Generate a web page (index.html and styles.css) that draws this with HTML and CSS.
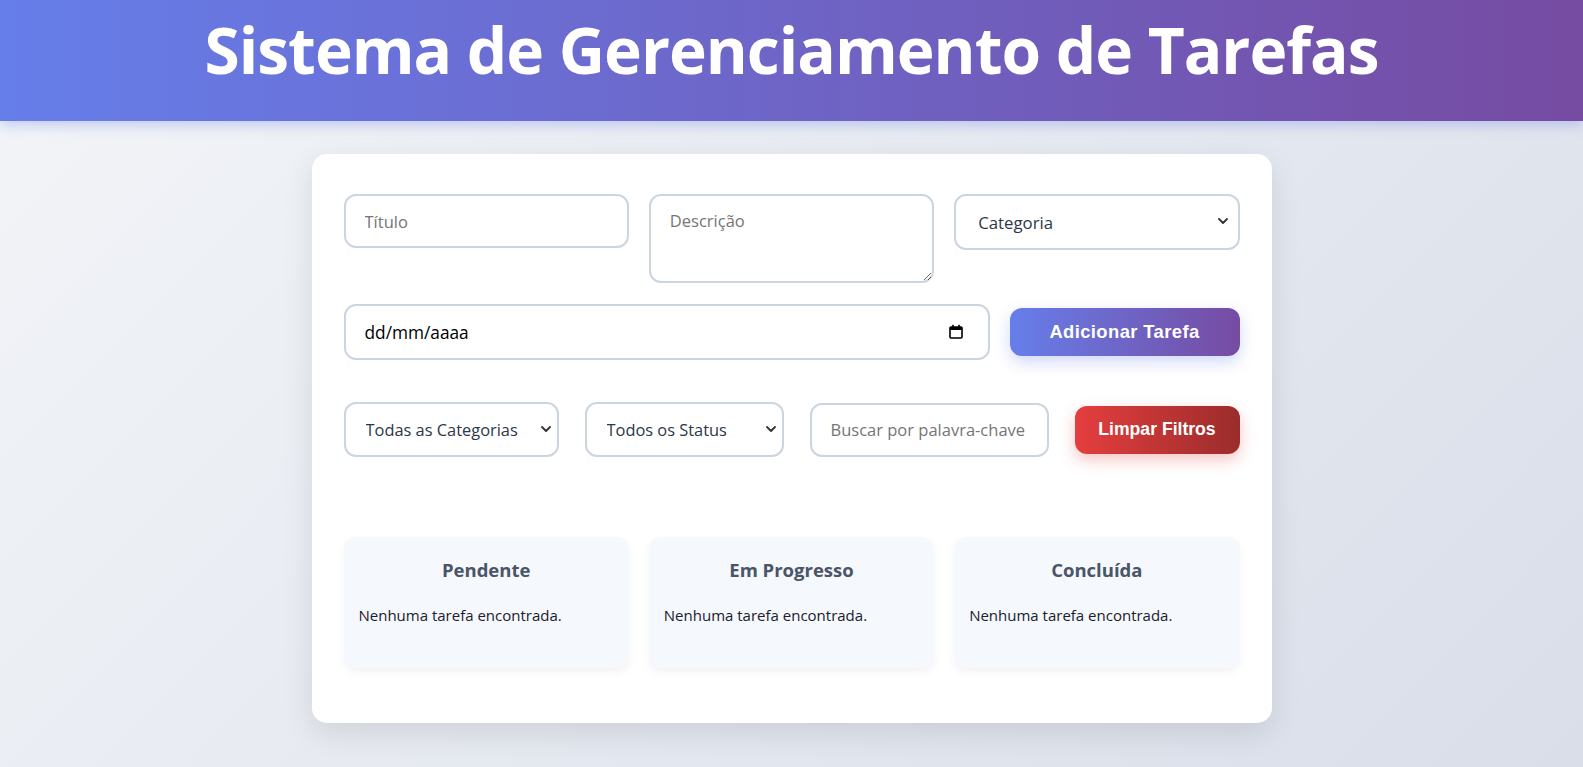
FILE: index.html
```html
<!DOCTYPE html>
<html lang="pt-BR">
<head>
<meta charset="utf-8">
<title>Sistema de Gerenciamento de Tarefas</title>
<link rel="stylesheet" href="styles.css">
</head>
<body>
<header class="app-header">
  <h1 class="app-title">Sistema de Gerenciamento de Tarefas</h1>
</header>
<main class="container">
  <form class="task-form">
    <div class="form-row row-top">
      <input class="field field-input" type="text" placeholder="Título">
      <textarea class="field field-area" placeholder="Descrição"></textarea>
      <div class="select-wrap">
        <select class="field field-select"><option>Categoria</option></select>
        <svg class="chevron" viewBox="0 0 10 6" width="10" height="6"><path d="M1 1l4 4 4-4" fill="none" stroke="#333" stroke-width="1.8" stroke-linecap="round" stroke-linejoin="round"/></svg>
      </div>
    </div>
    <div class="form-row row-bottom">
      <div class="field date-field">
        <span class="date-text">dd/mm/aaaa</span>
        <svg class="calendar" viewBox="0 0 14 15" width="14" height="15"><rect x="1" y="3" width="12" height="11" rx="1" fill="none" stroke="#000" stroke-width="1.6"/><rect x="1" y="3" width="12" height="3" fill="#000"/><rect x="3.2" y="0.8" width="1.6" height="3" fill="#000"/><rect x="9.2" y="0.8" width="1.6" height="3" fill="#000"/></svg>
      </div>
      <button type="button" class="btn btn-primary">Adicionar Tarefa</button>
    </div>
  </form>

  <div class="filters">
    <div class="select-wrap filter-cat">
      <select class="field filter-select"><option>Todas as Categorias</option></select>
      <svg class="chevron" viewBox="0 0 10 6" width="10" height="6"><path d="M1 1l4 4 4-4" fill="none" stroke="#333" stroke-width="1.8" stroke-linecap="round" stroke-linejoin="round"/></svg>
    </div>
    <div class="select-wrap filter-status">
      <select class="field filter-select"><option>Todos os Status</option></select>
      <svg class="chevron" viewBox="0 0 10 6" width="10" height="6"><path d="M1 1l4 4 4-4" fill="none" stroke="#333" stroke-width="1.8" stroke-linecap="round" stroke-linejoin="round"/></svg>
    </div>
    <input class="field search-input" type="text" placeholder="Buscar por palavra-chave">
    <button type="button" class="btn btn-danger">Limpar Filtros</button>
  </div>

  <section class="columns">
    <div class="column">
      <h2 class="column-title">Pendente</h2>
      <p class="empty">Nenhuma tarefa encontrada.</p>
    </div>
    <div class="column">
      <h2 class="column-title">Em Progresso</h2>
      <p class="empty">Nenhuma tarefa encontrada.</p>
    </div>
    <div class="column">
      <h2 class="column-title">Concluída</h2>
      <p class="empty">Nenhuma tarefa encontrada.</p>
    </div>
  </section>
</main>
</body>
</html>
```

FILE: styles.css
```css
* { box-sizing: border-box; }

html, body {
  margin: 0;
  padding: 0;
}

body {
  min-height: 767px;
  font-family: "Open Sans", "Noto Sans", sans-serif;
  background: linear-gradient(135deg, #f3f5f8 0%, #d9dee9 100%);
  color: #2d3748;
  overflow: hidden;
}

.app-header {
  height: 121px;
  background: linear-gradient(90deg, #667eea 0%, #764ba2 100%);
  box-shadow: 0 4px 12px rgba(102, 126, 234, 0.35);
  display: flex;
  align-items: center;
  justify-content: center;
  padding-bottom: 22px;
}

.app-title {
  margin: 0;
  color: #fff;
  font-size: 64px;
  font-weight: 700;
  letter-spacing: -1px;
  line-height: 1;
}

.container {
  width: 960px;
  margin: 33px auto 0;
  background: #fff;
  border-radius: 15px;
  padding: 40px 32px 55px;
  box-shadow: 0 10px 30px rgba(0, 0, 0, 0.1);
}

.task-form {
  display: flex;
  flex-direction: column;
  gap: 21px;
}

.row-top {
  display: grid;
  grid-template-columns: repeat(3, minmax(0, 1fr));
  gap: 20px;
  align-items: start;
}

.row-bottom {
  display: flex;
  gap: 20px;
  align-items: center;
}

.field {
  border: 2px solid #cbd5e0;
  border-radius: 12px;
  background: #fff;
  font-family: "Open Sans", "Noto Sans", sans-serif;
  font-size: 16px;
  color: #2d3748;
  outline: none;
}

.field::placeholder { color: #757575; }

.field-input {
  width: 100%;
  height: 54px;
  padding: 0 19px;
  font-size: 16.5px;
}

.field-area {
  width: 100%;
  height: 89px;
  padding: 13px 19px;
  resize: vertical;
  font-size: 16.5px;
}

.select-wrap {
  position: relative;
}

.field-select,
.filter-select {
  appearance: none;
  -webkit-appearance: none;
  width: 100%;
  height: 56px;
  padding: 0 22px;
  font-size: 16.8px;
}

.chevron {
  position: absolute;
  right: 12px;
  top: 50%;
  margin-top: -4px;
  pointer-events: none;
}

.date-field {
  flex: 1;
  height: 56px;
  display: flex;
  align-items: center;
  justify-content: space-between;
  padding: 0 25px 0 19px;
  color: #000;
  font-size: 17.3px;
}

.calendar { margin-top: -1px; }

.btn {
  border: none;
  border-radius: 12px;
  color: #fff;
  font-family: "Liberation Sans", Arial, sans-serif;
  font-weight: 700;
  font-size: 17.6px;
  height: 48px;
  cursor: pointer;
  padding: 0;
}

.btn-primary {
  width: 230px;
  font-size: 18.4px;
  letter-spacing: 0.4px;
  background: linear-gradient(90deg, #667eea 0%, #764ba2 100%);
  box-shadow: 0 6px 15px rgba(102, 126, 234, 0.3);
}

.btn-danger {
  width: 165px;
  background: linear-gradient(90deg, #e53e3e 0%, #9b2c2c 100%);
  box-shadow: 0 6px 15px rgba(229, 62, 62, 0.3);
}

.filters {
  display: flex;
  align-items: center;
  justify-content: space-between;
  margin-top: 42px;
}

.filter-cat { width: 215px; }
.filter-status { width: 199px; }

.filter-select {
  height: 55px;
  padding: 0 20px;
  font-size: 16.4px;
}

.filters .chevron { right: 8px; }

.search-input {
  width: 239px;
  height: 54px;
  padding: 0 19px;
  font-size: 16.5px;
}

.columns {
  display: grid;
  grid-template-columns: repeat(3, 1fr);
  gap: 20px;
  margin-top: 80px;
}

.column {
  height: 131px;
  background: #f5f8fc;
  border-radius: 12px;
  padding: 19px 15px;
  box-shadow: 0 4px 10px rgba(0, 0, 0, 0.05);
}

.column-title {
  margin: 0;
  text-align: center;
  font-size: 18.5px;
  font-weight: 700;
  color: #4a5568;
  line-height: 28px;
}

.empty {
  margin: 21px 0 0;
  font-size: 15px;
  color: #1a202c;
  line-height: 20px;
}
```
